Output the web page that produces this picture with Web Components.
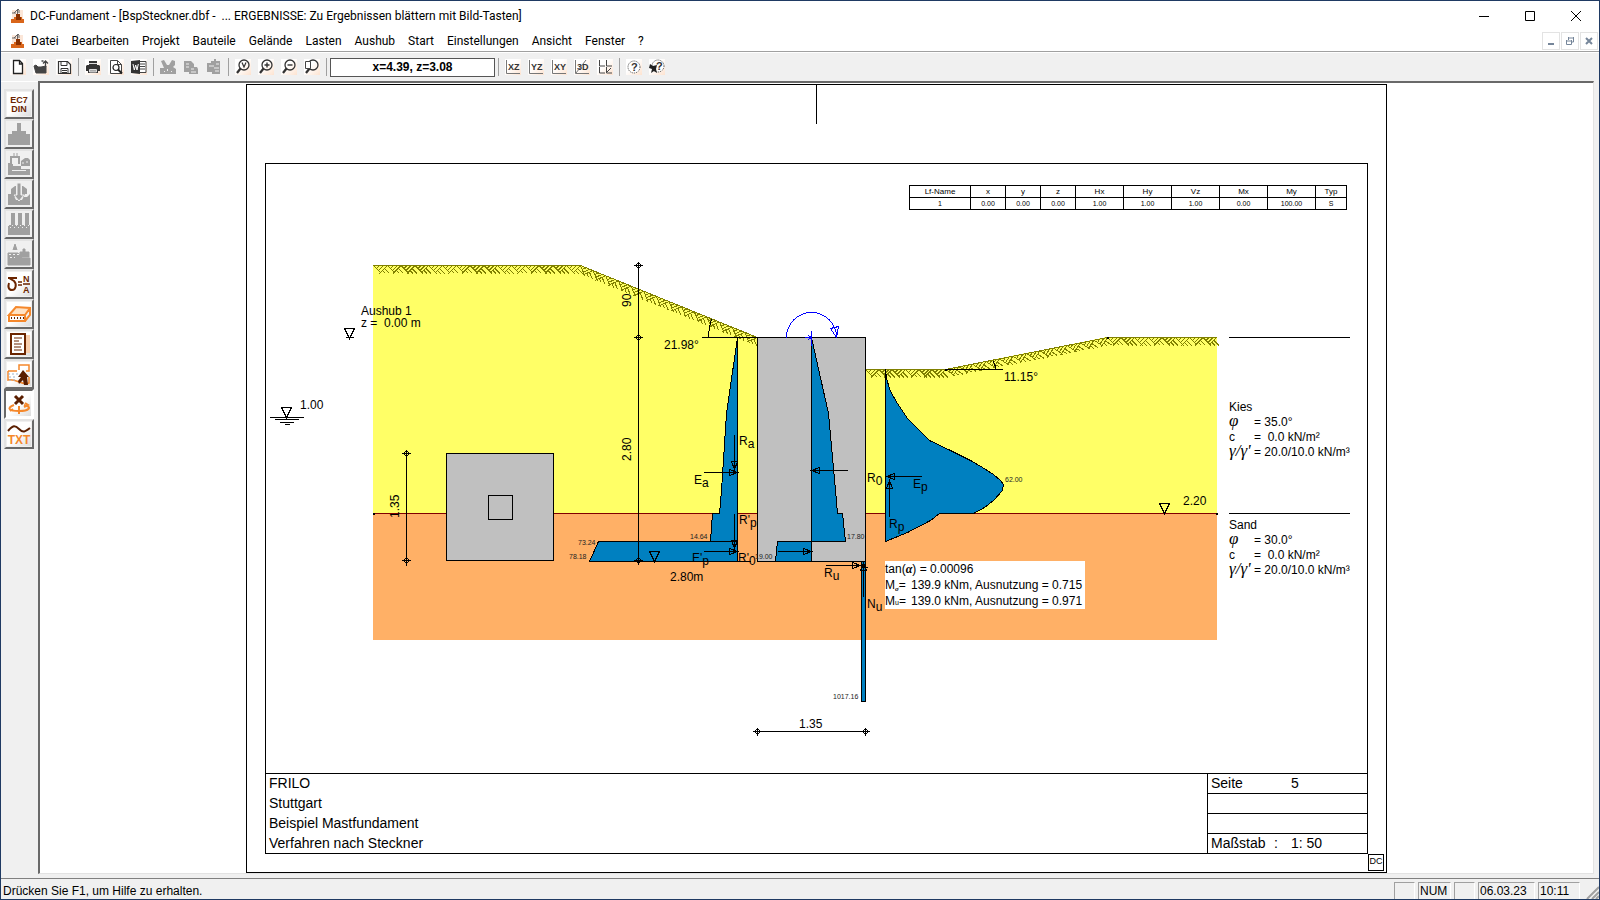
<!DOCTYPE html>
<html lang="de">
<head>
<meta charset="utf-8">
<title>DC-Fundament</title>
<style>
  html, body { height: 100%; margin: 0; }
  body {
    font: 12px/16px "Liberation Sans", Arial, sans-serif;
    color: #000;
    background: #f0f0f0;
  }
</style>
</head>
<body>
<dc-window>
  <dc-title-bar slot="title">DC-Fundament - [BspSteckner.dbf -&nbsp; ... ERGEBNISSE: Zu Ergebnissen blättern mit Bild-Tasten]</dc-title-bar>
  <dc-menu-bar slot="menu">
    <button>Datei</button>
    <button>Bearbeiten</button>
    <button>Projekt</button>
    <button>Bauteile</button>
    <button>Gelände</button>
    <button>Lasten</button>
    <button>Aushub</button>
    <button>Start</button>
    <button>Einstellungen</button>
    <button>Ansicht</button>
    <button>Fenster</button>
    <button>?</button>
  </dc-menu-bar>
  <dc-toolbar slot="tools">
    <dc-tool icon="new" label="Neu"></dc-tool>
    <dc-tool icon="open" label="Öffnen"></dc-tool>
    <dc-tool icon="save" label="Speichern"></dc-tool>
    <hr>
    <dc-tool icon="print" label="Drucken"></dc-tool>
    <dc-tool icon="preview" label="Seitenansicht"></dc-tool>
    <dc-tool icon="word" label="Word"></dc-tool>
    <hr>
    <dc-tool icon="cut" label="Ausschneiden" disabled></dc-tool>
    <dc-tool icon="copy" label="Kopieren" disabled></dc-tool>
    <dc-tool icon="paste" label="Einfügen" disabled></dc-tool>
    <hr>
    <dc-tool icon="zoomAll" label="Vollbild"></dc-tool>
    <dc-tool icon="zoomIn" label="Vergrößern"></dc-tool>
    <dc-tool icon="zoomOut" label="Verkleinern"></dc-tool>
    <dc-tool icon="zoomPage" label="Ausschnitt"></dc-tool>
    <hr>
    <input aria-label="Koordinaten" value="x=4.39, z=3.08" readonly>
    <hr>
    <dc-tool icon="xz" label="Ebene XZ"></dc-tool>
    <dc-tool icon="yz" label="Ebene YZ"></dc-tool>
    <dc-tool icon="xy" label="Ebene XY"></dc-tool>
    <dc-tool icon="iso" label="Räumlich"></dc-tool>
    <dc-tool icon="views" label="Alle Ansichten"></dc-tool>
    <hr>
    <dc-tool icon="help" label="Hilfe"></dc-tool>
    <dc-tool icon="context" label="Kontexthilfe"></dc-tool>
  </dc-toolbar>
  <dc-side-bar slot="side">
    <dc-tool large icon="norm" label="Norm"></dc-tool>
    <dc-tool large icon="footing" label="Fundament" disabled></dc-tool>
    <dc-tool large icon="terrain" label="Gelände" disabled></dc-tool>
    <dc-tool large icon="load" label="Lasten" disabled></dc-tool>
    <dc-tool large icon="piles" label="Pfähle" disabled></dc-tool>
    <dc-tool large icon="slope" label="Böschung" disabled></dc-tool>
    <dc-tool large icon="sigma" label="Spannungen"></dc-tool>
    <dc-tool large icon="solid" label="Körper"></dc-tool>
    <dc-tool large icon="list" label="Protokoll"></dc-tool>
    <dc-tool large icon="pick" label="Auswahl"></dc-tool>
    <dc-tool large icon="turn" label="Drehen" pressed></dc-tool>
    <dc-tool large icon="txt" label="Text"></dc-tool>
  </dc-side-bar>
  <dc-sheet>
    <dc-load-table></dc-load-table>
    <dc-section></dc-section>
    <dc-title-block slot="footer">
      <span>FRILO</span>
      <span>Stuttgart</span>
      <span>Beispiel Mastfundament</span>
      <span>Verfahren nach Steckner</span>
      <span slot="page">5</span>
      <span slot="scale">1: 50</span>
    </dc-title-block>
  </dc-sheet>
  <dc-status-bar slot="status">
    Drücken Sie F1, um Hilfe zu erhalten.
    <span slot="keys">NUM</span>
    <span slot="date">06.03.23</span>
    <span slot="time">10:11</span>
  </dc-status-bar>
</dc-window>

<script>
const define = (name, markup, setup) => {
  const template = document.createElement('template');
  template.innerHTML = markup;
  customElements.define(name, class extends HTMLElement {
    constructor () {
      super();
      this.attachShadow({ mode: 'open' }).appendChild(template.content.cloneNode(true));
    }
    connectedCallback () {
      if (setup) setup(this, this.shadowRoot);
    }
  });
};

const LENS = '<circle cx="9" cy="6" r="5" fill="none" stroke="#333" stroke-width="1.3"/><path d="M5.5 9.5L2 14" stroke="#333" stroke-width="2.2"/>';
const axes = s => `<path d="M1.5 1v13.5H15" fill="none" stroke="#777"/><text x="3" y="11" font-size="9" font-weight="bold" fill="#333">${s}</text>`;

// 16 x 16
const ICONS = {
  new: '<path d="M3.5 1.5h6l3 3v10h-9z M9.5 1.5v3.500h3" fill="#fff" stroke="#222" stroke-width="1.3"/>',
  open: '<path d="M1 7l2-1 2 2h3l5-1v7H3z" fill="#444" stroke="#444"/><path d="M12.500 8V2M10 4.500L12.500 2 15 4.500M8.500 2h2" fill="none" stroke="#444" stroke-width="1.3"/>',
  save: '<path d="M2.500 2.500h9l3 3v9h-12z" fill="#fff" stroke="#333" stroke-width="1.2"/><path d="M5 2.500v4h6v-4M5 14.500V9.500h7v5M6 11.500h5M6 13.500h5" fill="none" stroke="#333"/>',
  print: '<path d="M4 2h8v4H4zM2 6h12l1 1v5h-2v2H3v-2H1V7z" fill="#333"/><path d="M4 4.500h8M4.500 10.500h7v2.500h-7z" fill="#aaa" stroke="#ddd"/>',
  preview: '<path d="M2.500 1.500h7l4 4v9h-11zM9.500 1.500v4h4" fill="#fff" stroke="#444"/><circle cx="8" cy="8.500" r="3" fill="#fff" stroke="#222" stroke-width="1.2"/><path d="M10 10.500l4 4" stroke="#222" stroke-width="2"/>',
  word: '<path d="M8 2.500h7v11H8" fill="#fff" stroke="#444"/><path d="M9 5h5M9 7.500h5M9 10h5" stroke="#444"/><path d="M0 2l9-1v14l-9-1z" fill="#333"/><path d="M2 5l1.300 6L4.700 6 6 11l1.300-6" fill="none" stroke="#fff"/>',
  cut: '<path d="M1 2l3-1 3 5h2l3-5 3 1v4l-2 2 3 2v5H0V9h4z" fill="#a0a0a0"/><path d="M4 12h1v1H4zM11 12h1v1h-1zM7 10h1v2H7z" fill="#eee"/>',
  copy: '<path d="M1 2h7l3 3v3h3l1 2v5H6v-2H1z" fill="#a0a0a0"/><path d="M3 5h3M3 8h3M8 10h3M8 13h5" stroke="#eee"/>',
  paste: '<path d="M1 4h4V2h3V0h2v2h4v13H6v-2H1z" fill="#a0a0a0"/><path d="M3 7h5M8 9h5M9 12h4M10 5h3" stroke="#eee"/>',
  zoomAll: LENS + '<path d="M7 3.500L9 8l2-4.500" fill="none" stroke="#333" stroke-width="1.200"/>',
  zoomIn: LENS + '<path d="M6.500 6h5M9 3.500v5" stroke="#333" stroke-width="1.400"/>',
  zoomOut: LENS + '<path d="M6.500 6h5" stroke="#333" stroke-width="1.400"/>',
  zoomPage: LENS + '<path d="M1.500 2.500h5v7h-5z" fill="#fff" stroke="#444"/>',
  xz: axes('XZ'),
  yz: axes('YZ'),
  xy: axes('XY'),
  iso: axes('3D') + '<path d="M2 14L12 1" stroke="#777"/>',
  views: '<path d="M2.500 1v6H8M9.500 1v6H15M2.500 8v6H8M9.500 8v6H15M10 13l4-4" fill="none" stroke="#444"/>',
  help: '<circle cx="8" cy="8" r="6" fill="#fff" stroke="#444" stroke-dasharray="1 1"/><text x="5" y="12" font-size="11" font-weight="bold" fill="#333">?</text>',
  context: '<circle cx="9" cy="7" r="6" fill="#fff" stroke="#444" stroke-dasharray="1 1"/><text x="7" y="11" font-size="11" font-weight="bold" fill="#333">?</text><path d="M1 5l3 2 4-1-1 4 1 4-3-2-3 2 1-4-3-1z" fill="#222"/>'
};

// 24 x 24
const LARGE = {
  norm: '<text x="12" y="11" text-anchor="middle" font-size="9" font-weight="bold" fill="#6b2500">EC7</text><text x="12" y="20" text-anchor="middle" font-size="9" font-weight="bold" fill="#6b2500">DIN</text>',
  footing: '<path d="M10 1h4v8h5v3h4v11H1V12h4V9h5z" fill="#a0a0a0"/>',
  terrain: '<path d="M1 12h3V5h8v7" fill="none" stroke="#a0a0a0" stroke-width="2"/><path d="M1 12h5v2h8V9l4-3h3l2 2v6h-9v3h9v6H1z" fill="#a0a0a0"/><path d="M7 1v5M10 1v5" stroke="#a0a0a0"/><path d="M15 11h2M19 10h2M5 18.500h14" stroke="#eee"/>',
  load: '<path d="M1 12h3V7l4-3h1v11H4zM23 12h-3V7l-4-3h-1v11h5zM1 12h5l3 6h6l3-6h5v11H1z" fill="#a0a0a0"/><path d="M10 1h4v12h3l-5 6-5-6h3z" fill="#a0a0a0" stroke="#eee"/>',
  piles: '<path d="M4 1h4v12H4zM11 1h4v12h-4zM18 1h4v12h-4zM1 13h22v10H1z" fill="#a0a0a0"/><path d="M1 13.500h22M3 15.500h20" stroke="#eee" stroke-dasharray="1 3"/>',
  slope: '<path d="M6 8l2-6 2 6M1 11h10l4 5h8v7H1zM13 15V10h3V7h2v3h4v5z" fill="#a0a0a0" stroke="#a0a0a0"/><path d="M2 12.500h10M3 15.500h5" stroke="#eee" stroke-dasharray="2 2"/>',
  sigma: '<path d="M1 6h9M2 6l5 3c3 3 2 9-2 9s-4-4-3-7" fill="none" stroke="#6b2500" stroke-width="2"/><path d="M11 10h4M11 13h4M16 12h7" stroke="#6b2500" stroke-width="1.500"/><text x="16" y="10" font-size="9" font-weight="bold" fill="#6b2500">N</text><text x="16" y="21" font-size="9" font-weight="bold" fill="#6b2500">A</text>',
  solid: '<path d="M2 13l7-8 14 1-5 8z" fill="#ffe2c4"/><path d="M2 13l7-8 14 1-5 7zM2 13v6h16v-6M18 19l5-6V6" fill="none" stroke="#f5882c" stroke-width="2"/><path d="M4 16h13" stroke="#6b2500" stroke-width="2" stroke-dasharray="1 2"/>',
  list: '<path d="M6 3h17v18H6z" fill="#f8cfae"/><path d="M4 2h14v20H4z" fill="#fff" stroke="#6b2500" stroke-width="2"/><path d="M7 6h8M7 9h5M7 12h8M7 15h7M7 18h8" stroke="#6b2500"/>',
  pick: '<path d="M1 9h9M12 8V3h10v6h-3M1 9v9c8-2 14 6 21 3v-6" fill="none" stroke="#f5882c" stroke-width="1.500"/><path d="M1 12h10M2 15h8M2 18h8" stroke="#9bb3cc" stroke-dasharray="2 2"/><path d="M16 8l6 7h-2l1 8h-4l-1-5-4 4-1-3 3-4h-3z" fill="#5a1e00"/>',
  turn: '<path d="M7 13c-8 3-5 6 5 6s14-4 5-6" fill="none" stroke="#f5882c" stroke-width="2"/><path d="M12 14v8M3 19l3-2M18 11l3 2-4 2" stroke="#f5882c" stroke-width="2" fill="none"/><path d="M8 4l8 8M16 4l-8 8" stroke="#5a1e00" stroke-width="3"/>',
  txt: '<path d="M1 9c5-6 7-6 11-2s6 3 11-1" fill="none" stroke="#5a1e00" stroke-width="2"/><text x="12" y="22" text-anchor="middle" font-size="12" font-weight="bold" fill="#f5882c">TXT</text>'
};

define('dc-window', `
  <style>
    :host {
      display: flex;
      flex-direction: column;
      box-sizing: border-box;
      height: 100vh;
      border: 1px solid #1f3a63;
      background: #f0f0f0;
    }
    main { flex: 1; display: flex; min-height: 0; }
  </style>
  <slot name="title"></slot>
  <slot name="menu"></slot>
  <slot name="tools"></slot>
  <main><slot name="side"></slot><slot></slot></main>
  <slot name="status"></slot>
`);

define('dc-logo', `
  <style>
    :host { display: block; width: 16px; height: 16px; }
    svg { display: block; }
  </style>
  <svg width="16" height="16">
    <path d="M3 2h11v12H3z" fill="#fbe6d8"/>
    <path d="M8.500 1v6M5 5l3-3 1-1 1 1v3M3 5h4" fill="none" stroke="#666"/>
    <path d="M7 6h4v4H7z" fill="#8a3000"/>
    <path d="M5 9h8v2h2v4H2v-4h3z" fill="#d9651a"/>
    <path d="M7 9h5v3H7z" fill="#8a3000"/>
  </svg>
`);

define('dc-title-bar', `
  <style>
    :host {
      display: flex;
      align-items: center;
      height: 29px;
      padding-left: 8px;
      background: #fff;
      font-family: Roboto, "Noto Sans", sans-serif;
    }
    .text { flex: 1; margin-left: 5px; white-space: nowrap; }
    button { width: 46px; height: 29px; padding: 0; border: 0; background: none; }
    svg { display: block; margin: auto; fill: none; stroke: #000; }
  </style>
  <dc-logo></dc-logo>
  <span class="text"><slot></slot></span>
  <button aria-label="Minimieren"><svg width="10" height="10"><path d="M0 5.500h10"/></svg></button>
  <button aria-label="Maximieren"><svg width="10" height="10"><path d="M.5.5h9v9h-9z"/></svg></button>
  <button aria-label="Schließen"><svg width="10" height="10"><path d="M0 0l10 10M10 0L0 10"/></svg></button>
`);

define('dc-menu-bar', `
  <style>
    :host {
      display: flex;
      align-items: center;
      height: 21px;
      padding-left: 8px;
      border-bottom: 1px solid #a0a0a0;
      background: #fff;
      font-family: Roboto, "Noto Sans", sans-serif;
    }
    nav { flex: 1; display: flex; }
    ::slotted(button) {
      padding: 0 7px 0 6px;
      border: 0;
      background: none;
      font: inherit;
      color: #000;
    }
    .child {
      box-sizing: border-box;
      width: 18px;
      height: 18px;
      margin-right: 1px;
      padding: 0;
      border: 1px solid #e3e3e3;
      background: #fff;
    }
    svg { display: block; margin: auto; fill: none; stroke: #76869a; }
  </style>
  <dc-logo></dc-logo>
  <nav><slot></slot></nav>
  <button class="child" aria-label="Fenster minimieren"><svg width="8" height="8"><path d="M1 7h6" stroke-width="2"/></svg></button>
  <button class="child" aria-label="Fenster wiederherstellen"><svg width="8" height="8"><path d="M2 1h6M2.500 0v3M7.500 0v5H6M0 4h5.500M.5 3v4.500h5V3"/></svg></button>
  <button class="child" aria-label="Fenster schließen"><svg width="8" height="8"><path d="M1 1l6 6M7 1L1 7" stroke-width="2"/></svg></button>
`);

define('dc-toolbar', `
  <style>
    :host {
      display: flex;
      align-items: center;
      gap: 1px;
      height: 28px;
      padding: 0 6px;
      border-top: 1px solid #fff;
    }
    ::slotted(hr) {
      width: 1px;
      height: 18px;
      margin: 0 2px;
      border: 0;
      background: #a0a0a0;
    }
    ::slotted(input) {
      box-sizing: border-box;
      width: 165px;
      height: 19px;
      padding: 0;
      border: 1px solid #555;
      background: #fff;
      font: bold 12px "Liberation Sans", Arial, sans-serif;
      text-align: center;
      outline: 0;
    }
  </style>
  <slot></slot>
`);

define('dc-side-bar', `
  <style>
    :host {
      display: flex;
      flex-direction: column;
      box-sizing: border-box;
      width: 37px;
      padding: 7px 3px;
      border-top: 1px solid #fff;
    }
  </style>
  <slot></slot>
`);

define('dc-tool', `
  <style>
    :host { display: block; }
    button {
      display: block;
      box-sizing: border-box;
      width: 22px;
      height: 22px;
      padding: 3px;
      border: 0;
      background: none;
    }
    svg {
      display: block;
      width: 16px;
      height: 16px;
      background: linear-gradient(135deg, #fff 40%, #fde3d0);
      font-family: "Liberation Sans", Arial, sans-serif;
    }
    :host([large]) button {
      width: 30px;
      height: 30px;
      padding: 1px;
      border: 2px solid;
      border-color: #e3e3e3 #696969 #696969 #e3e3e3;
    }
    :host([large]) svg {
      width: 24px;
      height: 24px;
      background: linear-gradient(135deg, #fff 50%, #dcdcdc);
    }
    :host([disabled]) svg { background: none; }
    :host([large][pressed]) button {
      border-color: #696969 #fff #fff #696969;
      background: #fff;
    }
  </style>
  <button><svg></svg></button>
`, (host, root) => {
  const size = host.hasAttribute('large') ? 24 : 16;
  const button = root.querySelector('button');
  const svg = root.querySelector('svg');
  button.setAttribute('aria-label', host.getAttribute('label'));
  button.disabled = host.hasAttribute('disabled');
  svg.setAttribute('viewBox', `0 0 ${size} ${size}`);
  svg.innerHTML = (size === 24 ? LARGE : ICONS)[host.getAttribute('icon')];
});

define('dc-sheet', `
  <style>
    :host {
      flex: 1;
      display: flex;
      justify-content: center;
      min-width: 0;
      margin: 0 5px 4px 0;
      padding-top: 1px;
      border: solid;
      border-width: 2px 1px 1px 2px;
      border-color: #696969 #e3e3e3 #e3e3e3 #696969;
      background: #fff;
    }
    .page {
      display: flex;
      flex-direction: column;
      box-sizing: border-box;
      height: 100%;
      aspect-ratio: 1141 / 789;
      border: 1px solid #000;
    }
    .fold { flex: none; width: 1px; height: 39px; margin: 0 auto 39px; background: #000; }
    .frame {
      flex: 1;
      display: flex;
      flex-direction: column;
      min-height: 0;
      margin: 0 18px;
      border: 1px solid #000;
    }
    .brand {
      align-self: flex-end;
      box-sizing: border-box;
      width: 16px;
      height: 17px;
      margin: 0 2px 1px 0;
      border: 1px solid #000;
      font-size: 9px;
      line-height: 12px;
      text-align: center;
    }
  </style>
  <div class="page">
    <div class="fold"></div>
    <div class="frame"><slot></slot><slot name="footer"></slot></div>
    <div class="brand">DC</div>
  </div>
`);

define('dc-load-table', `
  <style>
    :host { display: block; align-self: flex-end; margin: 21px 20px 0 0; }
    table {
      width: 438px;
      border-collapse: collapse;
      table-layout: fixed;
      font-size: 8px;
      line-height: 11px;
      text-align: center;
    }
    th, td { height: 11px; padding: 0; border: 1px solid #000; font-weight: normal; }
    td { font-size: 7px; }
    .name { width: 60px; }
    .pos { width: 34px; }
    .typ { width: 30px; }
  </style>
  <table>
    <thead>
      <tr><th class="name">Lf-Name</th><th class="pos">x</th><th class="pos">y</th><th class="pos">z</th><th>Hx</th><th>Hy</th><th>Vz</th><th>Mx</th><th>My</th><th class="typ">Typ</th></tr>
    </thead>
    <tbody>
      <tr><td>1</td><td>0.00</td><td>0.00</td><td>0.00</td><td>1.00</td><td>1.00</td><td>1.00</td><td>0.00</td><td>100.00</td><td>S</td></tr>
    </tbody>
  </table>
`);

define('dc-title-block', `
  <style>
    :host { display: flex; font-size: 14px; line-height: 19px; border-top: 1px solid #000; }
    .project { flex: 1; display: grid; grid-auto-rows: 20px; height: 79px; padding-left: 3px; }
    .info { flex: 0 0 159px; border-left: 1px solid #000; }
    .row { display: grid; grid-template-columns: 63px 17px 1fr; height: 19px; padding-left: 3px; border-top: 1px solid #000; }
    .row:first-child { border-top: 0; }
  </style>
  <div class="project"><slot></slot></div>
  <div class="info">
    <div class="row"><span>Seite</span><span></span><slot name="page"></slot></div>
    <div class="row"></div>
    <div class="row"></div>
    <div class="row"><span>Maßstab</span><span>:</span><slot name="scale"></slot></div>
  </div>
`);

define('dc-status-bar', `
  <style>
    :host {
      display: flex;
      align-items: flex-end;
      gap: 3px;
      height: 20px;
      border-top: 1px solid #808080;
      line-height: 16px;
    }
    .message { flex: 1; padding-left: 2px; }
    .cell {
      box-sizing: border-box;
      height: 17px;
      padding-left: 1px;
      border: solid;
      border-width: 1px 1px 0 1px;
      border-color: #a0a0a0 #fff #fff #a0a0a0;
    }
    .small { width: 21px; }
    .keys { width: 33px; }
    .date { width: 57px; }
    .time { width: 42px; }
    svg { display: block; width: 16px; height: 16px; stroke: #a0a0a0; stroke-width: 2; }
  </style>
  <span class="message"><slot></slot></span>
  <span class="cell small"></span>
  <span class="cell keys"><slot name="keys"></slot></span>
  <span class="cell small"></span>
  <span class="cell date"><slot name="date"></slot></span>
  <span class="cell time"><slot name="time"></slot></span>
  <svg><path d="M4 16L16 4M9 16l7-7M13 16l3-3"/></svg>
`);

// surface hatching that follows a ground line
const hatch = (x1, y1, x2, y2) => {
  const length = Math.hypot(x2 - x1, y2 - y1);
  const angle = Math.atan2(y2 - y1, x2 - x1) * 180 / Math.PI;
  const count = Math.round(length / 14);
  const step = length / count;
  let d = `M0 0H${length}`;
  for (let i = 0; i < count; i++) {
    const x = i * step;
    d += `M${x} 0l8 8M${x + step} 0l-8 8M${x + 10} 0l-5 5M${x + 6} 0l-3 3M${x + 11} 3l5 5M${x + 9} 5l3 3`;
  }
  return `<path class="hatch" transform="translate(${x1} ${y1}) rotate(${angle})" d="${d}"/>`;
};

// line with a hollow head at its end
const arrow = (x1, y1, x2, y2) => {
  const length = Math.hypot(x2 - x1, y2 - y1);
  const angle = Math.atan2(y2 - y1, x2 - x1) * 180 / Math.PI;
  return `<path class="line" transform="translate(${x2} ${y2}) rotate(${angle})" d="M${-length} 0H0M-8 -3L0 0L-8 3z"/>`;
};

const tick = (x, y) => `<path class="line" d="M${x - 5} ${y}h9M${x} ${y - 4}v8"/><circle class="line" cx="${x}" cy="${y}" r="2"/>`;
const level = (x, y) => `<path class="line" d="M${x - 5} ${y - 10}h10L${x} ${y}z"/>`;
const label = (x, y, main, sub) => `<text x="${x}" y="${y}">${main}<tspan dy="3">${sub}</tspan></text>`;
const small = (x, y, s) => `<text class="small" x="${x}" y="${y}">${s}</text>`;

const soil = (y, name, phi) => `
  <text x="1229" y="${y}">${name}</text>
  <text class="greek" x="1229" y="${y + 15}">φ</text><text x="1254" y="${y + 15}">= ${phi}°</text>
  <text x="1229" y="${y + 30}">c</text><text x="1254" y="${y + 30}">=  0.0 kN/m²</text>
  <text class="greek" x="1229" y="${y + 45}">γ/γ'</text><text x="1254" y="${y + 45}">= 20.0/10.0 kN/m³</text>`;

define('dc-section', `
  <style>
    :host { flex: 1; display: block; min-height: 0; }
    svg { display: block; width: 100%; height: 100%; }
    g { shape-rendering: crispEdges; }
    text { font: 12px "Liberation Sans", Arial, sans-serif; white-space: pre; }
    .small { font-size: 7px; fill: #222; }
    .greek { font: italic 17px "Liberation Serif", "Times New Roman", serif; }
    .sign { font: italic bold 12px "Liberation Serif", "Times New Roman", serif; }
    .index { font-size: 7px; }
    .line { fill: none; stroke: #000; }
    .hatch { fill: none; stroke: #808000; }
    .gravel { fill: #ffff66; }
    .sand { fill: #ffb066; }
    .concrete { fill: #c0c0c0; stroke: #000; }
    .stress { fill: #0080c0; stroke: #000; }
    .layer { stroke: #800000; }
    .moment { fill: none; stroke: #00f; }
  </style>
  <svg viewBox="266 210 1101 563" role="img" aria-label="Schnitt">
    <g>
      <path class="gravel" d="M373 265H580L757 337V513H373zM865 369H945L1107 337H1217V513H865z"/>
      <path class="sand" d="M373 513H1217V640H373z"/>
      <path fill="#fff" d="M885 561h200v48H885z"/>
    </g>
    <g transform="translate(.5 .5)">
      ${hatch(373, 265, 580, 265)}
      ${hatch(580, 265, 757, 337)}
      ${hatch(865, 369, 945, 369)}
      ${hatch(945, 369, 1107, 337)}
      ${hatch(1107, 337, 1216, 337)}
      <path class="layer" d="M373 513H1217"/>
      <path d="M372 512h2v2h-2zM1215 512h2v2h-2zM1106 336h2v2h-2zM944 368h2v2h-2z"/>

      <path class="concrete" d="M446 453h107v107H446zM488 495h24v24h-24z"/>
      <path class="concrete" d="M757 337h108v224H757z"/>

      <path class="stress" d="M737 337L726 413L721 490L719 513H712L710 541H737zM737 541H598L589 561H737z"/>
      <path class="stress" d="M811 337L828 413L835 490L837 513H842L845 541H811zM811 541H777L775 561H811z"/>
      <path class="stress" d="M885 369L886 378L890 391L897 403L907 418L929 440L950 450L970 460L982 467L993 474L1000 480L1003 484L1002 490L993 500L984 507L973 513H939L930 520L907 532L885 541z"/>
      <path class="stress" d="M861 561h4v140h-4z"/>

      <path class="line" d="M701 337H757M708 337Q708 328 711 319M945 369H1002M995 369Q995 365 993 361M589 561H750"/>
      <path class="line" d="M1228 337H1349M1228 513H1349M638 265V564M406 449V565M757 731H865"/>
      ${tick(638, 265)}${tick(638, 337)}${tick(638, 560)}
      ${tick(406, 453)}${tick(406, 560)}
      ${tick(757, 731)}${tick(865, 731)}

      ${level(349, 338)}<path class="line" d="M345 337h8"/>
      ${level(286, 417)}<path class="line" d="M269 417h34M274 419h24M279 422h14M284 424h5"/>
      ${level(654, 561)}
      ${level(1164, 513)}

      ${arrow(703, 472, 737, 472)}
      ${arrow(734, 434, 734, 469)}
      ${arrow(703, 551, 737, 551)}
      ${arrow(734, 513, 734, 548)}
      ${arrow(847, 470, 811, 470)}
      ${arrow(777, 551, 811, 551)}
      ${arrow(921, 476, 886, 476)}
      ${arrow(889, 516, 889, 480)}
      ${arrow(825, 565, 860, 565)}
      ${arrow(863, 596, 863, 562)}<path class="line" d="M861 567h6"/>

      <path class="moment" d="M786 337A25 25 0 0 1 836 337M830 328L838 326L836 337zM804 337h7M811 330v15M808 335l3 2-3 2"/>
    </g>

    <text x="361" y="315">Aushub 1</text>
    <text x="361" y="327">z =  0.00 m</text>
    <text x="300" y="409">1.00</text>
    <text transform="translate(399 518) rotate(-90)">1.35</text>
    <text transform="translate(631 307) rotate(-90)">90</text>
    <text transform="translate(631 461) rotate(-90)">2.80</text>
    <text x="664" y="349">21.98°</text>
    <text x="1004" y="381">11.15°</text>
    <text x="1183" y="505">2.20</text>
    <text x="670" y="581">2.80m</text>
    <text x="799" y="728">1.35</text>

    ${label(739, 445, 'R', 'a')}
    ${label(694, 484, 'E', 'a')}
    ${label(739, 524, "R'", 'p')}
    ${label(692, 562, "E'", 'p')}
    ${label(738, 562, "R'", '0')}
    ${label(867, 482, 'R', '0')}
    ${label(913, 488, 'E', 'p')}
    ${label(889, 528, 'R', 'p')}
    ${label(824, 577, 'R', 'u')}
    ${label(867, 608, 'N', 'u')}

    ${small(578, 545, '73.24')}
    ${small(569, 559, '78.18')}
    ${small(690, 539, '14.64')}
    ${small(847, 539, '17.80')}
    ${small(755, 559, '19.00')}
    ${small(833, 699, '1017.16')}
    ${small(1005, 482, '62.00')}

    <text x="885" y="573">tan(<tspan class="sign">α</tspan>) = 0.00096</text>
    <text x="885" y="589">M<tspan class="sign index" dy="2">σ</tspan><tspan dy="-2">=</tspan></text>
    <text x="911" y="589">139.9 kNm, Ausnutzung = 0.715</text>
    <text x="885" y="605">M<tspan class="index">u</tspan>=</text>
    <text x="911" y="605">139.0 kNm, Ausnutzung = 0.971</text>
    ${soil(411, 'Kies', '35.0')}
    ${soil(529, 'Sand', '30.0')}
  </svg>
`);
</script>
</body>
</html>
